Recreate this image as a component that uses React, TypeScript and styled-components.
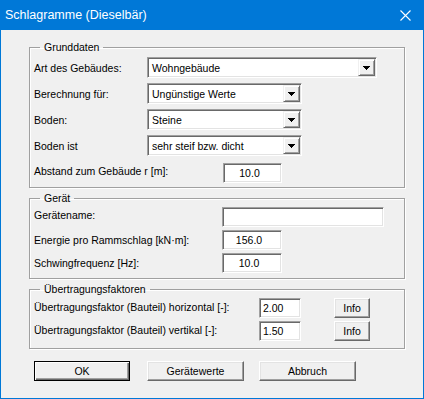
import React from "react";
import styled, { createGlobalStyle } from "styled-components";

const Global = createGlobalStyle`
  body { margin: 0; background: #ffffff; }
  * { box-sizing: border-box; }
`;

const Window = styled.div`
  width: 424px;
  height: 399px;
  background: #f0f0f0;
  border: 1px solid #0078d7;
  border-top: none;
  display: flex;
  flex-direction: column;
  font-family: "Liberation Sans", Arial, sans-serif;
  font-size: 10.5px;
  color: #000;
`;

const TitleBar = styled.div`
  height: 30px;
  flex: none;
  background: #0078d7;
  display: flex;
  align-items: center;
  justify-content: space-between;
  padding: 0 12px 0 4px;
  color: #fff;
  font-family: "Liberation Sans", Arial, sans-serif;
  font-size: 12.5px;
`;

const Body = styled.div`
  padding: 11px 18px 0 28px;
  display: flex;
  flex-direction: column;
`;

const Group = styled.fieldset<{ $top?: number; $pt: number; $pb: number; $gap: number }>`
  margin: ${(p) => p.$top ?? 0}px 0 0 0;
  padding: ${(p) => p.$pt}px 4px ${(p) => p.$pb}px 4px;
  border: 1px solid #a0a0a0;
  box-shadow: inset 1px 1px 0 #fff, 1px 1px 0 #fff;
  min-inline-size: 0;
  display: flex;
  flex-direction: column;
  gap: ${(p) => p.$gap}px;
`;

const Legend = styled.legend`
  margin-left: 6px;
  padding: 0 4px 0 4px;
  line-height: 13px;
  font-size: 10.5px;
`;

const Row = styled.div<{ $h?: number; $mt?: number }>`
  display: flex;
  align-items: center;
  height: ${(p) => p.$h ?? 20}px;
  margin-top: ${(p) => p.$mt ?? 0}px;
`;

const Label = styled.span<{ $w: number; $dy?: number }>`
  width: ${(p) => p.$w}px;
  flex: none;
  white-space: nowrap;
  position: relative;
  top: ${(p) => p.$dy ?? 0}px;
`;

const Sunken = styled.div<{ $w: number; $h: number }>`
  width: ${(p) => p.$w}px;
  height: ${(p) => p.$h}px;
  flex: none;
  background: #fff;
  border-style: solid;
  border-width: 1px;
  border-color: #a0a0a0 #fff #fff #a0a0a0;
  box-shadow: inset 1px 1px 0 #696969, inset -1px -1px 0 #e3e3e3;
  display: flex;
  align-items: center;
`;

const EditText = styled.span<{ $align: "left" | "center" }>`
  flex: 1;
  text-align: ${(p) => p.$align};
  padding: ${(p) => (p.$align === "left" ? "0 0 0 3px" : "0 6px 0 0")};
  white-space: nowrap;
`;

const ComboText = styled.span`
  flex: 1;
  padding-left: 4px;
  white-space: nowrap;
  overflow: hidden;
`;

const ArrowButton = styled.div`
  width: 17px;
  height: 17px;
  margin-right: 1px;
  flex: none;
  background: #f0f0f0;
  border-style: solid;
  border-width: 1px;
  border-color: #f0f0f0 #696969 #696969 #f0f0f0;
  box-shadow: inset 1px 1px 0 #fff, inset -1px -1px 0 #a0a0a0;
  display: flex;
  align-items: center;
  justify-content: center;
`;

const Button = styled.button<{ $w: number; $default?: boolean }>`
  width: ${(p) => p.$w}px;
  height: 20px;
  flex: none;
  padding: 0;
  background: #f0f0f0;
  font-family: "Liberation Sans", Arial, sans-serif;
  font-size: 10.5px;
  color: #000;
  border-style: solid;
  border-width: 1px;
  border-color: ${(p) => (p.$default ? "#000" : "#fff #696969 #696969 #fff")};
  box-shadow: ${(p) =>
    p.$default
      ? "inset 1px 1px 0 #fff, inset -1px -1px 0 #696969, inset -2px -2px 0 #a0a0a0"
      : "inset -1px -1px 0 #a0a0a0, inset 1px 1px 0 #e3e3e3"};
`;

const ButtonRow = styled.div`
  display: flex;
  margin: 12px 0 0 5px;
`;

const Spacer = styled.div<{ $w: number }>`
  width: ${(p) => p.$w}px;
  flex: none;
`;

const Arrow = () => (
  <svg width="7" height="4" viewBox="0 0 7 4" shapeRendering="crispEdges">
    <rect x="0" y="0" width="7" height="1" fill="#000" />
    <rect x="1" y="1" width="5" height="1" fill="#000" />
    <rect x="2" y="2" width="3" height="1" fill="#000" />
    <rect x="3" y="3" width="1" height="1" fill="#000" />
  </svg>
);

const CloseIcon = () => (
  <svg width="11" height="11" viewBox="0 0 11 11">
    <path d="M0.5 0.5 L10.5 10.5 M10.5 0.5 L0.5 10.5" stroke="#fff" strokeWidth="1.1" />
  </svg>
);

const Combo = ({ w, value }: { w: number; value: string }) => (
  <Sunken $w={w} $h={21}>
    <ComboText>{value}</ComboText>
    <ArrowButton>
      <Arrow />
    </ArrowButton>
  </Sunken>
);

const Edit = ({ w, value, align = "center" }: { w: number; value: string; align?: "left" | "center" }) => (
  <Sunken $w={w} $h={20}>
    <EditText $align={align}>{value}</EditText>
  </Sunken>
);

export default function App() {
  return (
    <>
      <Global />
      <Window>
        <TitleBar>
          <span>Schlagramme (Dieselbär)</span>
          <CloseIcon />
        </TitleBar>
        <Body>
          <Group $pt={3} $pb={4} $gap={5}>
            <Legend>Grunddaten</Legend>
            <Row $h={21}>
              <Label $w={113}>Art des Gebäudes:</Label>
              <Combo w={230} value="Wohngebäude" />
            </Row>
            <Row $h={21}>
              <Label $w={113}>Berechnung für:</Label>
              <Combo w={155} value="Ungünstige Werte" />
            </Row>
            <Row $h={21}>
              <Label $w={113}>Boden:</Label>
              <Combo w={155} value="Steine" />
            </Row>
            <Row $h={21}>
              <Label $w={113}>Boden ist</Label>
              <Combo w={155} value="sehr steif bzw. dicht" />
            </Row>
            <Row $mt={2}>
              <Label $w={189} $dy={-2}>Abstand zum Gebäude r [m]:</Label>
              <Edit w={59} value="10.0" />
            </Row>
          </Group>

          <Group $top={4} $pt={2} $pb={5} $gap={3}>
            <Legend>Gerät</Legend>
            <Row>
              <Label $w={188} $dy={-2}>Gerätename:</Label>
              <Edit w={162} value="" />
            </Row>
            <Row>
              <Label $w={188}>Energie pro Rammschlag [kN·m]:</Label>
              <Edit w={60} value="156.0" />
            </Row>
            <Row>
              <Label $w={188}>Schwingfrequenz [Hz]:</Label>
              <Edit w={60} value="10.0" />
            </Row>
          </Group>

          <Group $top={4} $pt={2} $pb={7} $gap={3}>
            <Legend>Übertragungsfaktoren</Legend>
            <Row>
              <Label $w={225} $dy={-1}>Übertragungsfaktor (Bauteil) horizontal [-]:</Label>
              <Edit w={42} value="2.00" align="left" />
              <Spacer $w={33} />
              <Button $w={36}>Info</Button>
            </Row>
            <Row>
              <Label $w={225} $dy={-1}>Übertragungsfaktor (Bauteil) vertikal [-]:</Label>
              <Edit w={42} value="1.50" align="left" />
              <Spacer $w={33} />
              <Button $w={36}>Info</Button>
            </Row>
          </Group>

          <ButtonRow>
            <Button $w={96} $default>
              OK
            </Button>
            <Spacer $w={17} />
            <Button $w={97}>Gerätewerte</Button>
            <Spacer $w={15} />
            <Button $w={97}>Abbruch</Button>
          </ButtonRow>
        </Body>
      </Window>
    </>
  );
}
